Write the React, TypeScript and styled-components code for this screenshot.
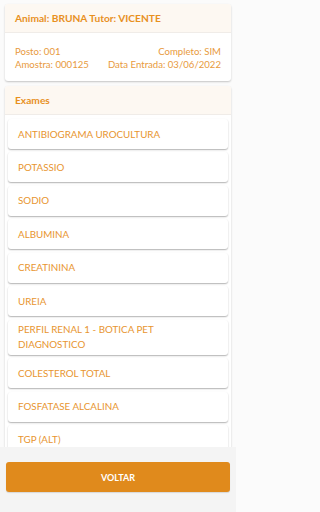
import React from "react";
import styled, { createGlobalStyle } from "styled-components";

const Global = createGlobalStyle`
  html, body { margin: 0; padding: 0; }
  body {
    background: #fbfbfb;
    font-family: Lato, "Open Sans", "DejaVu Sans", sans-serif;
    color: #e69430;
  }
  * { box-sizing: border-box; }
`;

const Screen = styled.div`
  width: 236px;
  height: 512px;
  display: flex;
  flex-direction: column;
  overflow: hidden;
`;

const Content = styled.div`
  flex: 1;
  min-height: 0;
  display: flex;
  flex-direction: column;
  gap: 5px;
  padding: 4px 5px 0 5px;
  overflow: hidden;
`;

const Card = styled.section<{ $grow?: boolean }>`
  background: #fff;
  border-radius: 3px;
  box-shadow: 0 1px 2px rgba(0, 0, 0, 0.22);
  display: flex;
  flex-direction: column;
  ${(p) => (p.$grow ? "flex: 1; min-height: 0; border-bottom-left-radius: 0; border-bottom-right-radius: 0;" : "")}
`;

const CardHeader = styled.header`
  background: #fdf8f2;
  border-bottom: 1px solid #f0ece8;
  height: 29px;
  padding: 0 10px;
  display: flex;
  align-items: center;
  font-size: 10.2px;
  font-weight: 700;
  color: #e8901f;
  border-radius: 3px 3px 0 0;
`;

const InfoBody = styled.div`
  padding: 12px 10px 10px 10px;
  display: grid;
  grid-template-columns: 1fr auto;
  row-gap: 0;
  font-size: 9.6px;
  line-height: 13px;
  color: #e89a3c;
`;

const Right = styled.span`
  text-align: right;
`;

const List = styled.div`
  flex: 1;
  min-height: 0;
  overflow: hidden;
  padding: 4px 3px 0 3px;
  display: flex;
  flex-direction: column;
  gap: 3.45px;
`;

const Item = styled.div`
  flex-shrink: 0;
  min-height: 30px;
  padding: 2.5px 10px;
  display: flex;
  align-items: center;
  background: #fff;
  border-radius: 3px;
  box-shadow: 0 1px 1.5px rgba(0, 0, 0, 0.3);
  font-size: 9.8px;
  line-height: 15px;
  color: #e8952f;
`;

const Footer = styled.footer`
  flex-shrink: 0;
  height: 65px;
  background: #f4f4f4;
  padding: 15px 6px 0 6px;
`;

const Button = styled.button`
  width: 100%;
  height: 30px;
  border: none;
  border-radius: 3px;
  background: #e08a1c;
  color: #fff;
  font-family: inherit;
  font-size: 9px;
  font-weight: 700;
  box-shadow: 0 1px 1px rgba(0, 0, 0, 0.12);
`;

const exames = [
  "ANTIBIOGRAMA UROCULTURA",
  "POTASSIO",
  "SODIO",
  "ALBUMINA",
  "CREATININA",
  "UREIA",
  "PERFIL RENAL 1 - BOTICA PET DIAGNOSTICO",
  "COLESTEROL TOTAL",
  "FOSFATASE ALCALINA",
  "TGP (ALT)",
];

export default function App() {
  return (
    <Screen>
      <Global />
      <Content>
        <Card>
          <CardHeader>Animal: BRUNA Tutor: VICENTE</CardHeader>
          <InfoBody>
            <span>Posto: 001</span>
            <Right>Completo: SIM</Right>
            <span>Amostra: 000125</span>
            <Right>Data Entrada: 03/06/2022</Right>
          </InfoBody>
        </Card>
        <Card $grow>
          <CardHeader>Exames</CardHeader>
          <List>
            {exames.map((e) => (
              <Item key={e}>{e}</Item>
            ))}
          </List>
        </Card>
      </Content>
      <Footer>
        <Button>VOLTAR</Button>
      </Footer>
    </Screen>
  );
}
